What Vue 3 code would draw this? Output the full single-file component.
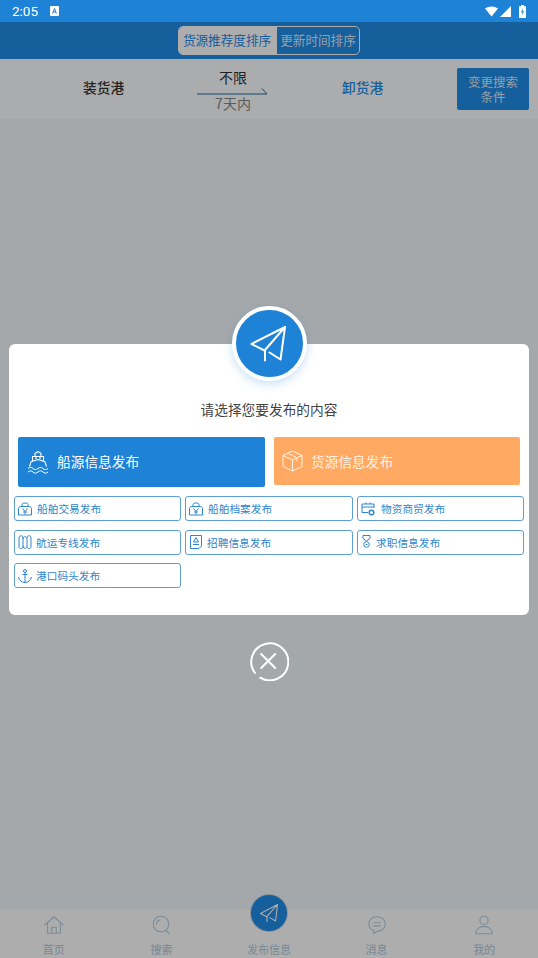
<template>
  <div class="page">
    <div class="status-bar">
      <span class="time">2:05</span>
      <svg class="sim" width="9" height="10" viewBox="0 0 9 10">
        <rect x="0" y="0" width="9" height="10" rx="1" fill="#fff" />
        <path d="M2.6 7.6 4.5 2.4 6.4 7.6M3.3 6h2.4" fill="none" stroke="#1e82d6" stroke-width="1" />
      </svg>
      <span class="spacer"></span>
      <svg width="13" height="11" viewBox="0 0 14 11" class="wifi">
        <path d="M0 2.2C4-.7 10-.7 14 2.2L7 11Z" fill="#fff" />
      </svg>
      <svg width="11" height="11" viewBox="0 0 11 11" class="signal">
        <path d="M11 0V11H0Z" fill="#fff" />
      </svg>
      <svg width="7" height="13" viewBox="0 0 7 13" class="battery">
        <path d="M2 0H5V1.2H7V13H0V1.2H2Z" fill="#fff" />
        <path d="M4 3 2 7.2H3.4L3 10.4 5 6.2H3.6Z" fill="#1e82d6" />
      </svg>
    </div>

    <div class="sort-bar">
      <div class="sort-tabs">
        <span class="sort-tab active">货源推荐度排序</span>
        <span class="sort-tab">更新时间排序</span>
      </div>
    </div>

    <div class="search-row">
      <div class="port load">装货港</div>
      <div class="route">
        <span class="route-top">不限</span>
        <svg class="route-arrow" width="72" height="8" viewBox="0 0 72 8">
          <path d="M0 7H70L65 1.5" fill="none" stroke="#1f6aa8" stroke-width="1" />
        </svg>
        <span class="route-bottom">7天内</span>
      </div>
      <div class="port unload">卸货港</div>
      <div class="change-btn">
        <div class="change-line">变更搜索</div>
        <div class="change-line">条件</div>
      </div>
    </div>

    <div class="content"></div>

    <div class="tab-bar">
      <div v-for="tab in tabs" :key="tab.label" class="tab-item">
        <svg v-if="tab.paths" class="tab-icon" width="22" height="22" viewBox="0 0 24 24">
          <path v-for="d in tab.paths" :key="d" :d="d" fill="none" stroke="#b6cfe2" stroke-width="1.2" stroke-linecap="round" stroke-linejoin="round" />
        </svg>
        <div v-else class="tab-publish">
          <svg width="24" height="24" viewBox="0 0 24 24">
            <path d="M20.5 3.5 3.5 12.6 9.3 15.6M20.5 3.5 10 15.4V20.5M20.5 3.5 18.6 20 12.8 16.6" fill="none" stroke="#fff" stroke-width="1.1" stroke-linejoin="round" stroke-linecap="round" />
          </svg>
        </div>
        <span class="tab-label">{{ tab.label }}</span>
      </div>
    </div>

    <div class="overlay">
      <div class="modal">
        <div class="modal-badge">
          <svg width="44" height="44" viewBox="0 0 44 44">
            <path d="M37 5 3.500 22 16.500 28.500M37 5 17 28V38.500M37 5 32.500 37.500 21.500 30.500" fill="none" stroke="#fff" stroke-width="2" stroke-linejoin="round" stroke-linecap="round" />
          </svg>
        </div>
        <p class="modal-title">请选择您要发布的内容</p>
        <div class="main-row">
          <div class="main-btn ship">
            <svg class="main-icon" width="22" height="24" viewBox="0 0 22 24">
              <path d="M8 6V3.500L11 1.500 14 3.500V6M5.500 11V6.500H16.500V11M2.500 16.500 4 11.800 11 9.500 18 11.800 19.500 16.500M9 6.500V9M13 6.500V9" fill="none" stroke="#fff" stroke-width="1.100" stroke-linejoin="round" />
              <path d="M1 18.500C3 17 4.500 17 6 18.500 7.500 20 9 20 11 18.500 13 17 14.500 17 16 18.500 17.500 20 19 20 21 18.500M1 22C3 20.500 4.500 20.500 6 22 7.500 23.500 9 23.500 11 22 13 20.500 14.500 20.500 16 22 17.500 23.500 19 23.500 21 22" fill="none" stroke="#fff" stroke-width="1" />
            </svg>
            <span class="main-label">船源信息发布</span>
          </div>
          <div class="main-btn cargo">
            <svg class="main-icon" width="21" height="22" viewBox="0 0 21 22">
              <path d="M10.500 1 20 5.500V16.500L10.500 21 1 16.500V5.500ZM1 5.500 10.500 10 20 5.500M10.500 10V21M5.500 3.200 15 7.800V11" fill="none" stroke="#fff3e6" stroke-width="1" stroke-linejoin="round" />
            </svg>
            <span>货源信息发布</span>
          </div>
        </div>
        <div class="sub-grid">
          <div v-for="item in subItems" :key="item.label" class="sub-btn">
            <svg class="sub-icon" width="16" height="16" viewBox="0 0 16 16">
              <path v-for="d in item.paths" :key="d" :d="d" fill="none" stroke="#2f86cc" stroke-width="1" stroke-linejoin="round" />
              <circle v-if="item.dot" cx="11.500" cy="11.500" r="2.300" fill="#fff" stroke="#2f86cc" stroke-width="1.500" />
            </svg>
            <span :style="{ marginLeft: item.gap + 'px' }">{{ item.label }}</span>
          </div>
        </div>
      </div>
      <svg class="close-icon" width="40" height="40" viewBox="0 0 40 40">
        <path d="M6 32A18.500 18.500 0 1 1 11.200 36.700" fill="none" stroke="#fff" stroke-width="2" stroke-linecap="round" />
        <path d="M12.200 13 26.200 27M26.200 13 12.200 27" fill="none" stroke="#fff" stroke-width="2" stroke-linecap="round" />
      </svg>
    </div>
  </div>
</template>

<script setup>
const shipPaths = [
  "M1.500 14V7.500C1.500 6 3 5.500 4 5.500H12C13 5.500 14.500 6 14.500 7.500V14Z",
  "M5 5.500V3.500C5 2.500 6 2 8 2 10 2 11 2.500 11 3.500V5.500",
  "M5.500 7.500 8 10.500 10.500 7.500M8 10.500V13.500M6 11H10",
];

const subItems = [
  { label: "船舶交易发布", gap: 4, paths: shipPaths },
  { label: "船舶档案发布", gap: 4, paths: shipPaths },
  {
    label: "物资商贸发布",
    gap: 5,
    dot: true,
    paths: ["M14 7V3H2V11.500H8", "M2 6H14M6 3V1.500M10 3V1.500"],
  },
  {
    label: "航运专线发布",
    gap: 3,
    paths: [
      "M2 4C2 1 6 1 6 4V13C6 15 2 15 2 13Z",
      "M6 5C6 2 10 2 10 5V12C10 15 6 15 6 12",
      "M10 4C10 1 14 1 14 4V13C14 15 10 15 10 13",
    ],
  },
  {
    label: "招聘信息发布",
    gap: 3,
    paths: ["M2.500 1.500H13.500V12L11 14.500H2.500Z", "M8 3.500 5.500 8H10.500Z", "M5 10.500H11"],
  },
  {
    label: "求职信息发布",
    gap: 0,
    paths: ["M3 1.500H10V4.500L6.500 7 3 4.500Z", "M3.700 10.500A2.800 2.800 0 1 1 9.300 10.500 2.800 2.800 0 1 1 3.700 10.500", "M5.500 10.500H7.500"],
  },
  {
    label: "港口码头发布",
    gap: 3,
    paths: [
      "M6.500 3A1.500 1.500 0 1 1 9.500 3 1.500 1.500 0 1 1 6.500 3",
      "M8 4.500V14.500M5.500 6.500H10.500",
      "M1.500 9C2 12.500 5 14.500 8 14.500 11 14.500 14 12.500 14.500 9",
    ],
  },
];

const tabs = [
  { label: "首页", paths: ["M2 12 12 3 22 12", "M5 10V21H19V10", "M9.500 21V14.500H14.500V21"] },
  { label: "搜索", paths: ["M3.500 11A8.500 8.500 0 1 1 20.500 11 8.500 8.500 0 1 1 3.500 11", "M17.500 18 21 21.500", "M7 11A5 5 0 0 1 11 6.500"] },
  { label: "发布信息" },
  { label: "消息", paths: ["M3 11C3 6 7 3 12 3 17 3 21 6 21 11 21 16 17 19 12 19L8.500 21.500V18C5 16.800 3 14.500 3 11Z", "M8.500 9.500H15.500M8.500 13H15.500"] },
  { label: "我的", paths: ["M7.500 7A4.500 4.500 0 1 1 16.500 7 4.500 4.500 0 1 1 7.500 7", "M3 21.500C3 16.500 7 13.500 12 13.500 17 13.500 21 16.500 21 21.500Z"] },
];
</script>

<style scoped>
.page {
  position: relative;
  width: 538px;
  height: 958px;
  display: flex;
  flex-direction: column;
  overflow: hidden;
  background: #f4f8fc;
  font-family: "Noto Sans CJK SC", "Noto Sans", sans-serif;
}

.status-bar {
  position: relative;
  z-index: 2;
  height: 22px;
  flex: none;
  display: flex;
  align-items: center;
  padding: 0 12px;
  background: #1e82d6;
  color: #fff;
}

.time {
  font-family: Roboto, sans-serif;
  font-size: 13.5px;
}

.sim {
  margin-left: 12px;
}

.spacer {
  flex: 1;
}

.signal {
  margin-left: 2px;
}

.battery {
  margin-left: 8px;
}

.sort-bar {
  height: 37px;
  flex: none;
  display: flex;
  align-items: center;
  justify-content: center;
  background: #1f8ce8;
}

.sort-tabs {
  display: flex;
  height: 27px;
  border: 1px solid #fff;
  border-radius: 5px;
  overflow: hidden;
}

.sort-tab {
  width: 82px;
  line-height: 25px;
  text-align: center;
  font-size: 12.6px;
  color: rgba(255, 255, 255, 0.85);
  white-space: nowrap;
}

.sort-tab.active {
  width: 96px;
  padding-right: 2px;
  background: #fff;
  color: #1f8ce8;
}

.search-row {
  position: relative;
  height: 59px;
  flex: none;
  display: flex;
  background: #fcfeff;
}

.port {
  position: absolute;
  top: 18px;
  font-size: 13.7px;
  line-height: 20px;
  font-weight: 500;
  color: #333;
}

.port.load {
  left: 83px;
}

.port.unload {
  left: 342px;
  color: #1f8ce8;
}

.route {
  position: absolute;
  left: 197px;
  top: 8px;
  width: 72px;
  display: flex;
  flex-direction: column;
  align-items: center;
}

.route-top {
  font-size: 14px;
  line-height: 20px;
  color: #333;
}

.route-arrow {
  display: block;
}

.route-bottom {
  font-size: 14px;
  line-height: 18px;
  margin-top: -1px;
  color: #888;
}

.change-btn {
  position: absolute;
  left: 457px;
  top: 9px;
  width: 72px;
  height: 42px;
  box-sizing: border-box;
  padding-top: 6px;
  border-radius: 2px;
  background: #1f8ce8;
  color: rgba(255, 255, 255, 0.85);
  font-size: 12.5px;
  text-align: center;
}

.change-line {
  height: 15px;
  line-height: 15px;
}

.content {
  flex: 1;
}

.tab-bar {
  height: 48px;
  flex: none;
  display: grid;
  grid-template-columns: repeat(5, 1fr);
  background: #fff;
}

.tab-item {
  position: relative;
  display: flex;
  flex-direction: column;
  align-items: center;
}

.tab-icon {
  margin-top: 4px;
}

.tab-label {
  position: absolute;
  top: 31px;
  font-size: 11px;
  line-height: 16px;
  color: #b0c9dd;
  white-space: nowrap;
}

.tab-publish {
  position: absolute;
  top: -15px;
  width: 36px;
  height: 36px;
  display: flex;
  align-items: center;
  justify-content: center;
  border-radius: 50%;
  background: #1f8ce8;
  box-shadow: 0 0 0 1px #c4d6e4;
}

.overlay {
  position: absolute;
  left: 0;
  right: 0;
  top: 22px;
  bottom: 0;
  padding-top: 322px;
  display: flex;
  flex-direction: column;
  align-items: center;
  background: rgba(0, 0, 0, 0.32);
}

.modal {
  position: relative;
  width: 520px;
  height: 271px;
  box-sizing: border-box;
  padding-top: 55px;
  border-radius: 6px;
  background: #fff;
}

.modal-badge {
  position: absolute;
  left: 223px;
  top: -38px;
  width: 75px;
  height: 75px;
  box-sizing: border-box;
  display: flex;
  align-items: center;
  justify-content: center;
  border: 4px solid #fff;
  border-radius: 50%;
  background: #1e82d6;
  box-shadow: 0 3px 10px rgba(30, 130, 214, 0.25);
}

.modal-title {
  margin: 0 0 18px;
  text-align: center;
  font-size: 13.7px;
  line-height: 20px;
  color: #444;
}

.main-row {
  display: flex;
  align-items: flex-start;
  gap: 9px;
  padding: 0 9px;
}

.main-btn {
  flex: 1;
  display: flex;
  align-items: center;
  border-radius: 2px;
  color: #fff;
  font-size: 13.7px;
}

.main-btn.ship {
  height: 50px;
  padding-left: 9px;
  gap: 8px;
  background: #1e82d6;
}

.main-label {
  margin-bottom: 2px;
}

.main-btn.cargo {
  height: 48px;
  padding-left: 8px;
  gap: 8px;
  background: #ffa963;
  color: #fff3e6;
}

.sub-grid {
  display: grid;
  grid-template-columns: 167px 168px 167px;
  grid-auto-rows: 25px;
  column-gap: 4px;
  row-gap: 8.5px;
  margin-top: 9px;
  padding: 0 5px;
}

.sub-btn {
  display: flex;
  align-items: center;
  box-sizing: border-box;
  padding-left: 2px;
  border: 1px solid #5d9fd2;
  border-radius: 3px;
  font-size: 10.7px;
  color: #2f86cc;
  white-space: nowrap;
}

.sub-icon {
  flex: none;
}

.close-icon {
  margin-top: 26px;
}
</style>
